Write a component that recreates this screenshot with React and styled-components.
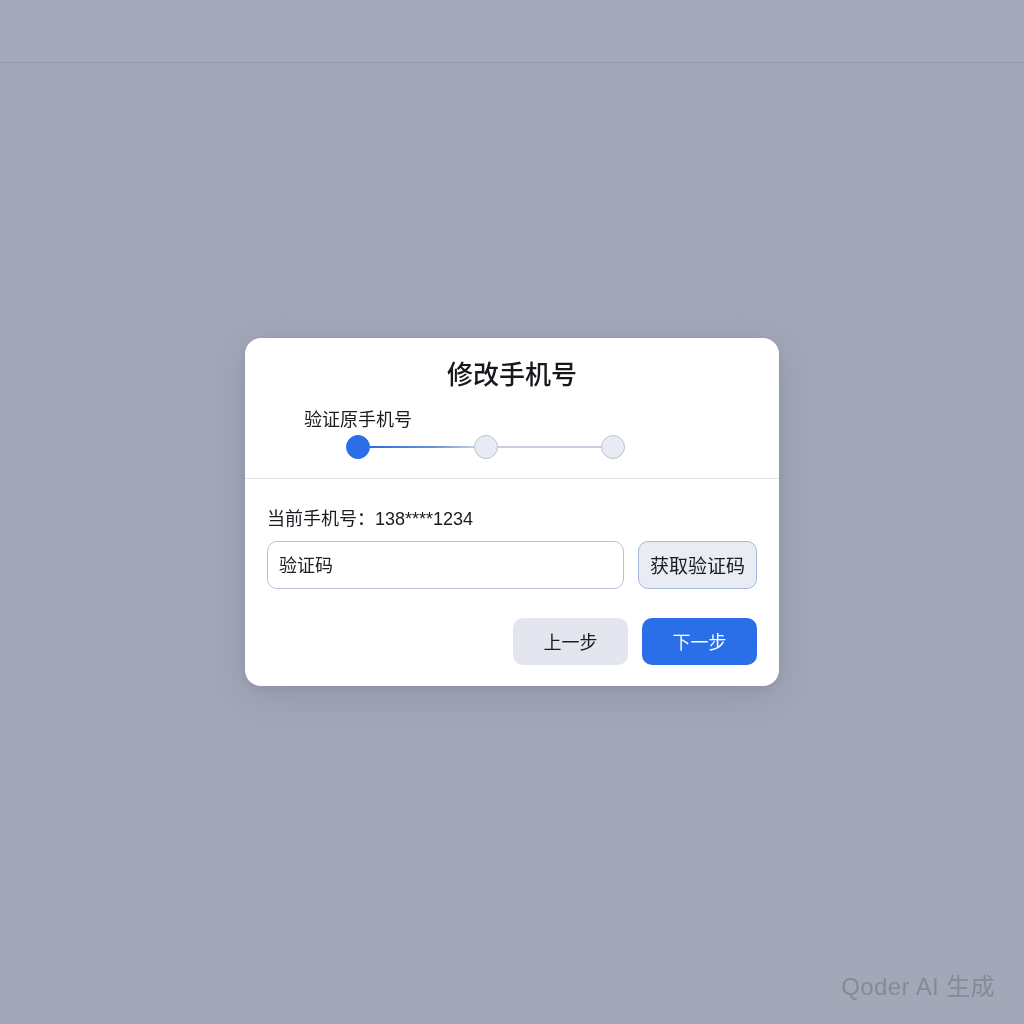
import React from "react";
import styled, { createGlobalStyle } from "styled-components";

const Global = createGlobalStyle`
  html, body { margin: 0; padding: 0; }
  body {
    background: #a3a8b9;
    font-family: "Liberation Sans", "Noto Sans CJK SC", sans-serif;
    color: #1f2329;
  }
  * { box-sizing: border-box; }
`;

const Page = styled.div`
  min-height: 100vh;
  background: #a3a8b9;
`;

const TopBar = styled.header`
  height: 63px;
  border-bottom: 1px solid #959aac;
  background: #a4a9ba;
`;

const Overlay = styled.div`
  position: fixed;
  inset: 0;
  display: flex;
  align-items: center;
  justify-content: center;
`;

const Dialog = styled.div`
  width: 534px;
  background: #ffffff;
  border-radius: 16px;
  box-shadow: 0 10px 40px rgba(60, 66, 90, 0.18), 0 2px 8px rgba(60, 66, 90, 0.1);
  overflow: hidden;
`;

const Head = styled.div`
  padding: 20px 0 19px;
  border-bottom: 1px solid #dfe3ec;
`;

const Title = styled.h2`
  margin: 0;
  text-align: center;
  font-size: 26px;
  line-height: 34px;
  font-weight: 500;
  color: #16181c;
`;

const Steps = styled.div`
  display: flex;
  align-items: flex-end;
  padding-left: 101px;
  margin-top: 15px;
`;

const Step = styled.div`
  width: 24px;
  display: flex;
  flex-direction: column;
  align-items: center;
`;

const StepLabel = styled.div`
  white-space: nowrap;
  font-size: 18px;
  line-height: 24px;
  height: 24px;
  margin-bottom: 4px;
  padding-top: 1px;
  color: #1a1c21;
`;

const Dot = styled.div`
  width: 24px;
  height: 24px;
  border-radius: 50%;
  background: ${(p) => (p.$active ? "#2a6fe8" : "#e8ebf2")};
  border: 1px solid ${(p) => (p.$active ? "#2a6fe8" : "#b9c2d6")};
`;

const Connector = styled.div`
  width: ${(p) => p.$w}px;
  height: 2px;
  margin-bottom: 11px;
  background: ${(p) =>
    p.$active
      ? "linear-gradient(90deg, #2f6fe0 0%, #6a8fd8 60%, #c3cbe0 100%)"
      : "#c8cfdf"};
`;

const Body = styled.div`
  padding: 27px 22px 21px;
`;

const Current = styled.div`
  font-size: 18px;
  line-height: 24px;
  padding-top: 1px;
  height: 24px;
  color: #1a1c21;
`;

const CodeRow = styled.div`
  display: flex;
  gap: 14px;
  margin-top: 11px;
`;

const CodeInput = styled.input`
  flex: 1;
  min-width: 0;
  height: 48px;
  border: 1px solid #b7c2da;
  border-radius: 10px;
  padding: 2px 11px 0;
  font-family: inherit;
  font-size: 18px;
  color: #1f2329;
  outline: none;
  background: #fff;
  &::placeholder { color: #1d2025; }
`;

const SendButton = styled.button`
  width: 119px;
  height: 48px;
  border-radius: 10px;
  border: 1px solid #a6b8dd;
  background: #e9ecf3;
  font-family: inherit;
  font-size: 19px;
  line-height: 24px;
  color: #1a1c21;
  padding: 3px 0 0;
`;

const Actions = styled.div`
  display: flex;
  justify-content: flex-end;
  gap: 14px;
  margin-top: 29px;
`;

const ActionButton = styled.button`
  width: 115px;
  height: 47px;
  border-radius: 10px;
  border: none;
  font-family: inherit;
  font-size: 18px;
  line-height: 24px;
  padding: 2px 0 0;
  background: ${(p) => (p.$primary ? "#2a6fe8" : "#e3e6ee")};
  color: ${(p) => (p.$primary ? "#ffffff" : "#1a1c21")};
`;

const Watermark = styled.div`
  position: fixed;
  right: 29px;
  bottom: 22px;
  font-family: "Liberation Sans", "Noto Sans CJK SC", sans-serif;
  font-size: 24px;
  color: #858a99;
  letter-spacing: 0.4px;
`;

export default function App() {
  return (
    <>
      <Global />
      <Page>
        <TopBar />
        <Overlay>
          <Dialog>
            <Head>
              <Title>修改手机号</Title>
              <Steps>
                <Step>
                  <StepLabel>验证原手机号</StepLabel>
                  <Dot $active />
                </Step>
                <Connector $active $w={104} />
                <Step>
                  <Dot />
                </Step>
                <Connector $w={103} />
                <Step>
                  <Dot />
                </Step>
              </Steps>
            </Head>
            <Body>
              <Current>当前手机号：138****1234</Current>
              <CodeRow>
                <CodeInput placeholder="验证码" />
                <SendButton>获取验证码</SendButton>
              </CodeRow>
              <Actions>
                <ActionButton>上一步</ActionButton>
                <ActionButton $primary>下一步</ActionButton>
              </Actions>
            </Body>
          </Dialog>
        </Overlay>
        <Watermark>Qoder AI 生成</Watermark>
      </Page>
    </>
  );
}
